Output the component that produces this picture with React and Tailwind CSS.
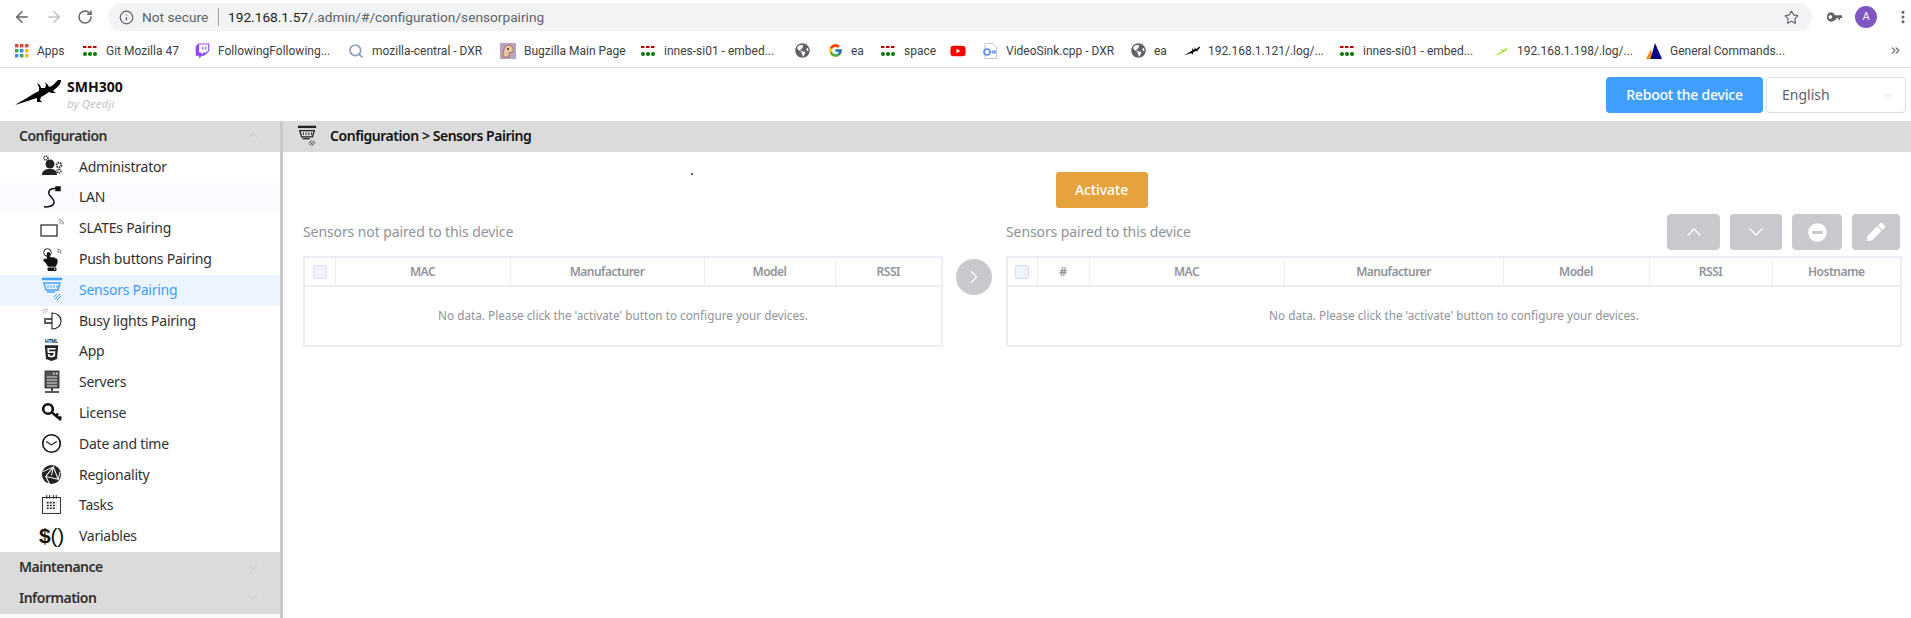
import React from 'react';
import { ArrowLeft, ArrowRight, RotateCw, Info, Star, EllipsisVertical, ChevronUp, ChevronDown, ChevronRight, ChevronsRight, Search } from 'lucide-react';
import { FaTwitch, FaYoutube, FaHtml5, FaGlobeAmericas, FaHandPointUp, FaPen, FaMinusCircle } from 'react-icons/fa';
import { FcGoogle } from 'react-icons/fc';

const Gecko = ({ className, color = '#000' }) => (
  <svg viewBox="0 0 46 27" className={className} fill={color}>
    <path d="M0 26 C8 21 14 18 20 14 L24 12 L24 8 L22 4 L25 6 L26 9 L30 9 L31 6 L30 3 L33 6 L34 8 C38 7 40 4 43 1 L46 1 C46 5 43 8 40 10 L38 12 L41 14 L37 14 L34 13 C31 15 28 17 26 18 L25 21 L27 23 L22 23 L22 19 C14 21 8 24 0 26 Z" />
  </svg>
);
const Dots = () => (
  <svg viewBox="0 0 16 16" className="w-4 h-4 shrink-0">
    <rect x="1" y="3" width="3.5" height="2" fill="#b00" /><rect x="6" y="3" width="3.5" height="2" fill="#b00" /><rect x="11" y="3" width="3.5" height="2" fill="#b00" />
    <circle cx="3" cy="11" r="2" fill="#070" /><circle cx="8" cy="11" r="2" fill="#070" /><circle cx="13" cy="11" r="2" fill="#070" />
  </svg>
);
const AppsIcon = () => (
  <svg viewBox="0 0 14 14" className="w-[14px] h-[14px] shrink-0">
    {[['#ea4335',0,0],['#ea4335',5,0],['#ea4335',10,0],['#34a853',0,5],['#4285f4',5,5],['#fbbc05',10,5],['#4285f4',0,10],['#34a853',5,10],['#fbbc05',10,10]].map(([c,x,y],i)=>(<rect key={i} x={x} y={y} width="3.4" height="3.4" fill={c} />))}
  </svg>
);
const Bug = () => (
  <svg viewBox="0 0 16 16" className="w-4 h-4 shrink-0"><rect width="16" height="16" fill="#b9a2c4" /><path d="M3 14 C3 8 4 3 8 2 C12 2 14 6 13 9 L9 10 L9 14 Z" fill="#e9c79a" stroke="#7a5a45" strokeWidth=".7" /><circle cx="8" cy="6" r="1" fill="#333" /></svg>
);
const Doc = () => (
  <svg viewBox="0 0 16 16" className="w-4 h-4 shrink-0"><path d="M3 .5 H11 L14.5 4 V15.5 H3 Z" fill="#fff" stroke="#c4c7cc" /><circle cx="5" cy="9" r="3" fill="none" stroke="#5b8fe0" strokeWidth="1.6" /><path d="M9 9 H14 M11 7 V11 M13 7 V11" stroke="#5b8fe0" /></svg>
);
const Ansible = () => (
  <svg viewBox="0 0 16 16" className="w-4 h-4 shrink-0"><path d="M0 16 L5 6 L7 16 Z" fill="#f58b1f" /><path d="M4.5 16 L9 0 L16 16 Z" fill="#00008b" /></svg>
);
const Green = () => (
  <svg viewBox="0 0 16 16" className="w-4 h-4 shrink-0"><path d="M1 13 C5 11 7 9 9 8 L8 6 L11 7 L15 4 L13 8 L10 9 C8 11 4 12 1 13 Z" fill="#9be22d" /></svg>
);
const GlobeI = () => <FaGlobeAmericas className="w-[15px] h-[15px] shrink-0 text-[#5f6368]" />;

const bookmarks = [
  { w: 'w-[67px]', icon: <AppsIcon />, t: 'Apps' },
  { w: 'w-[113px]', icon: <Dots />, t: 'Git Mozilla 47' },
  { w: 'w-[153px]', icon: <FaTwitch className="w-[15px] h-4 shrink-0 text-[#9146ff]" />, t: 'FollowingFollowing...' },
  { w: 'w-[152px]', icon: <Search className="w-4 h-4 shrink-0 text-[#8aa0b8]" strokeWidth={2.5} />, t: 'mozilla-central - DXR' },
  { w: 'w-[140px]', icon: <Bug />, t: 'Bugzilla Main Page' },
  { w: 'w-[155px]', icon: <Dots />, t: 'innes-si01 - embed...' },
  { w: 'w-[33px]', icon: <GlobeI /> },
  { w: 'w-[52px]', icon: <FcGoogle className="w-[15px] h-[15px] shrink-0" />, t: 'ea' },
  { w: 'w-[70px]', icon: <Dots />, t: 'space' },
  { w: 'w-[32px]', icon: <FaYoutube className="w-4 h-4 shrink-0 text-[#f00]" /> },
  { w: 'w-[149px]', icon: <Doc />, t: 'VideoSink.cpp - DXR' },
  { w: 'w-[53px]', icon: <GlobeI />, t: 'ea' },
  { w: 'w-[155px]', icon: <Gecko className="w-4 h-4 shrink-0" />, t: '192.168.1.121/.log/...' },
  { w: 'w-[154px]', icon: <Dots />, t: 'innes-si01 - embed...' },
  { w: 'w-[153px]', icon: <Green />, t: '192.168.1.198/.log/...' },
  { w: 'w-[160px]', icon: <Ansible />, t: 'General Commands...' },
];

const Wave = ({ x, y, c = '#666', s = 1 }) => (
  <path d={`M${x} ${y} a${2 * s} ${2 * s} 0 0 1 ${2 * s} ${2 * s} M${x} ${y - 2 * s} a${4 * s} ${4 * s} 0 0 1 ${4 * s} ${4 * s}`} fill="none" stroke={c} strokeWidth=".9" />
);
const AdminI = () => (
  <svg viewBox="0 0 22 22" className="w-[22px] h-[22px]" fill="#222">
    <circle cx="9" cy="9" r="4.5" /><path d="M1 20 C1 15 5 14 9 14 C13 14 16 15 16 20 Z" />
    <circle cx="5" cy="3" r="2" fill="none" stroke="#222" strokeWidth="1.5" strokeDasharray="1 .7" /><circle cx="18" cy="10" r="2.4" fill="none" stroke="#222" strokeWidth="1.8" strokeDasharray="1.4 .8" /><circle cx="18" cy="16" r="1.8" fill="none" stroke="#222" strokeWidth="1.5" strokeDasharray="1 .6" />
  </svg>
);
const LanI = () => (
  <svg viewBox="0 0 22 24" className="w-[22px] h-6" fill="none" stroke="#111" strokeWidth="1.5">
    <path d="M15 3.5 C10 3 7 5 8 9 C9 12 14 14 13 18 C12 22 7 22 3 22" /><rect x="15" y="2" width="4" height="3.5" fill="#111" />
  </svg>
);
const SlateI = () => (
  <svg viewBox="0 0 24 20" className="w-6 h-5" fill="none">
    <rect x="1" y="7" width="16" height="11" stroke="#222" strokeWidth="1.2" /><Wave x="19" y="4" s={1.1} />
  </svg>
);
const PushI = () => (
  <div className="relative w-[22px] h-6">
    <FaHandPointUp className="w-[19px] h-[19px] absolute left-0 top-[5px] text-[#111]" />
    <svg viewBox="0 0 22 24" className="w-[22px] h-6 absolute left-0 top-0" fill="none"><circle cx="6.5" cy="5.5" r="3.8" stroke="#222" strokeWidth="1" /><Wave x="16" y="4" s={1} /></svg>
  </div>
);
const SensorI = ({ c = '#409eff', w = 'w-[22px] h-6' }) => (
  <svg viewBox="0 0 22 24" className={w} fill="none" stroke={c}>
    <path d="M1 2 H21" strokeWidth="2.6" /><path d="M3 6 H19 L17 13 H5 Z" strokeWidth="1.4" /><path d="M7 8 V11 M10 8 V11 M13 8 V11 M16 8 V11" strokeWidth="1" /><path d="M6 15 H14" strokeWidth="1.4" /><path d="M14 22 L19 17 M16 23 L20 19 M13 20 L16 17" strokeWidth="1" />
  </svg>
);
const BusyI = () => (
  <svg viewBox="0 0 22 24" className="w-[22px] h-6" fill="none" stroke="#222">
    <path d="M11 5 C17 5 20 9 20 13 C20 18 16 21 11 21 Z" strokeWidth="1.1" /><path d="M5 11 H11 M5 15 H11 M4 10 V16" strokeWidth="1.4" /><path d="M2 6 a3 3 0 0 1 4 -2 M1 3 a5 5 0 0 1 6 -1" stroke="#999" strokeWidth=".8" />
  </svg>
);
const HtmlI = () => (
  <div className="flex flex-col items-center text-[#222]">
    <span className="text-[5px] leading-[5px] font-bold font-['Liberation_Sans',sans-serif]">HTML</span>
    <FaHtml5 className="w-[17px] h-[18px]" />
  </div>
);
const ServerI = () => (
  <svg viewBox="0 0 22 24" className="w-[22px] h-6" fill="none">
    <rect x="4" y="1" width="14" height="17" fill="#555" stroke="#222" strokeWidth=".8" /><path d="M6 7 H16 M6 10 H16 M6 13 H16 M6 16 H16" stroke="#ddd" strokeWidth="1" /><circle cx="13" cy="3.4" r="1" fill="#ddd" /><circle cx="16" cy="3.4" r="1" fill="#ddd" /><path d="M11 18 V21 M4 22 H18" stroke="#222" strokeWidth="1.6" />
  </svg>
);
const KeyI = () => (
  <svg viewBox="0 0 22 22" className="w-[22px] h-[22px]" fill="none" stroke="#111" strokeWidth="2.6">
    <circle cx="7" cy="7" r="4.8" /><path d="M11 10.5 L20 18 M15 14 L17 11.5 M18 17 L20 14.5" />
  </svg>
);
const ClockI = () => (
  <svg viewBox="0 0 22 22" className="w-[21px] h-[21px]" fill="none" stroke="#111">
    <circle cx="11" cy="11" r="9.2" strokeWidth="1.7" /><path d="M5.5 9 L11 12.5 L16.5 9" strokeWidth="1.2" />
  </svg>
);
const GlobeDark = () => (
  <svg viewBox="0 0 22 22" className="w-[21px] h-[21px]">
    <circle cx="11" cy="11" r="10" fill="#222" /><path d="M13 3 L18 16 L5 13 Z M13 3 L11 12 M2 8 L13 3 M5 13 L9 21 M18 16 L20 8" fill="none" stroke="#fff" strokeWidth="1.1" />
  </svg>
);
const TasksI = () => (
  <svg viewBox="0 0 20 20" className="w-[19px] h-[19px]" fill="none" stroke="#222">
    <rect x=".6" y="2.6" width="18.8" height="16.8" strokeWidth="1" /><path d="M5 0 V4 M8 0 V4 M12 0 V4 M15 0 V4" strokeWidth="1" /><path d="M5 8 H15 M5 11 H15 M5 14 H15" strokeWidth="1.7" strokeDasharray="2 1.2" />
  </svg>
);

const items = [
  ['Administrator', <AdminI />], ['LAN', <LanI />], ['SLATEs Pairing', <SlateI />], ['Push buttons Pairing', <PushI />],
  ['Sensors Pairing', <SensorI />], ['Busy lights Pairing', <BusyI />], ['App', <HtmlI />],
  ['Servers', <ServerI />], ['License', <KeyI />], ['Date and time', <ClockI />],
  ['Regionality', <GlobeDark />], ['Tasks', <TasksI />],
  ['Variables', <span className="text-[21px] leading-none text-[#111] font-['Liberation_Sans',sans-serif] whitespace-nowrap"><b>$</b>()</span>],
];

const SectionHead = ({ t, up }) => (
  <div className="h-[30.8px] bg-[#dbdbdb] flex items-center justify-between pl-[19px] pr-[20px] pb-[2px] text-[14px] font-semibold tracking-[-0.5px] text-[#303133]">
    <span>{t}</span>
    {up ? <ChevronUp className="w-[14px] h-[14px] text-[#b0b3b8]" strokeWidth={1} /> : <ChevronDown className="w-[14px] h-[14px] text-[#b0b3b8]" strokeWidth={1} />}
  </div>
);

const Th = ({ w, children, last }) => (
  <th className={`${w} h-[29px] p-0 border-b-2 border-[#ebeef5] ${last ? '' : 'border-r'} text-[12px] font-semibold tracking-[-0.5px] text-[#909399] text-center`}>{children}</th>
);
const Check = () => <span className="inline-block align-middle w-[14px] h-[14px] rounded-[2px] bg-[#edf2fc] border border-[#dcdfe6]" />;

const SquareBtn = ({ w, children }) => (
  <div className={`${w} h-9 rounded-[4px] bg-[#c8c9cc] flex items-center justify-center text-white`}>{children}</div>
);

export default function App() {
  return (
    <div className="w-[1911px] h-[618px] overflow-hidden bg-white flex flex-col font-['Noto_Sans',sans-serif]">
      <div className="h-[34px] flex items-center bg-white font-['Roboto',sans-serif]">
        <div className="w-[108px] flex items-center pl-[13px] gap-[14px] shrink-0">
          <ArrowLeft className="w-[18px] h-[18px] text-[#5f6368]" strokeWidth={2} />
          <ArrowRight className="w-[18px] h-[18px] text-[#bdc1c6]" strokeWidth={2} />
          <RotateCw className="w-4 h-4 text-[#5f6368]" strokeWidth={2.2} />
        </div>
        <div className="w-[1704px] shrink-0 h-7 rounded-full bg-[#f1f3f4] flex items-center pl-[11px] pr-[13px] text-[13.7px]">
          <Info className="w-[15px] h-[15px] text-[#5f6368] shrink-0" strokeWidth={2} />
          <span className="ml-[8px] text-[#5f6368] w-[67px] whitespace-nowrap">Not secure</span>
          <span className="ml-[9px] w-px h-[18px] bg-[#9aa0a6]" />
          <span className="ml-[9px] text-[#202124] whitespace-nowrap"><span>192.168.1.57</span><span className="text-[#5f6368]">/.admin/#/configuration/sensorpairing</span></span>
          <Star className="ml-auto w-[15px] h-[15px] text-[#5f6368]" strokeWidth={1.8} />
        </div>
        <div className="flex-1 flex items-center pl-[15px] gap-[13px]">
          <svg viewBox="0 0 16 10" className="w-[15px] h-[10px]" fill="#5f6368"><path d="M4 0 A5 5 0 0 1 8.6 3 H16 V6 H14 V8 H12 V6 H10 V8 H8.6 A5 5 0 1 1 4 0 Z M3.5 3 A2 2 0 1 0 3.6 7 A2 2 0 0 0 3.5 3 Z" /></svg>
          <span className="w-[22px] h-[22px] rounded-full bg-[#7e57c2] text-white text-[11px] flex items-center justify-center">A</span>
          <EllipsisVertical className="w-4 h-4 ml-[5px] text-[#5f6368]" strokeWidth={2.5} />
        </div>
      </div>
      <div className="h-[34px] flex items-center pl-[15px] border-b border-[#dadce0] text-[12px] text-[#3c4043] font-['Roboto',sans-serif] shrink-0">
        {bookmarks.map((b, i) => (
          <div key={i} className={`${b.w} flex items-center gap-[8px] shrink-0 whitespace-nowrap`}>
            {b.icon}{b.t && <span>{b.t}</span>}
          </div>
        ))}
        <ChevronsRight className="ml-auto mr-[9px] w-[13px] h-[13px] text-[#5f6368]" strokeWidth={2} />
      </div>

      <div className="h-[53px] flex items-center justify-between shrink-0">
        <div className="flex items-start pl-[15px]">
          <Gecko className="w-[46px] h-[27px]" />
          <div className="ml-[6px] flex flex-col -mt-[1px]">
            <span className="text-[14px] leading-[18px] font-bold text-[#111]">SMH300</span>
            <span className="text-[11.5px] leading-[15px] italic text-[#c0c4cc]">by Qeedji</span>
          </div>
        </div>
        <div className="flex items-center pr-[5px] gap-[3px]">
          <div className="w-[157px] h-9 rounded-[4px] bg-[#409eff] text-white text-[14px] font-medium tracking-[-0.2px] flex items-center justify-center">Reboot the device</div>
          <div className="w-[140px] h-9 rounded-[4px] border border-[#dcdfe6] text-[#606266] text-[14px] flex items-center justify-between pl-[15px] pr-[10px]">
            <span>English</span><ChevronDown className="w-[14px] h-[14px] text-[#c0c4cc]" strokeWidth={1.2} />
          </div>
        </div>
      </div>

      <div className="flex-1 flex min-h-0">
        <div className="w-[280px] shrink-0 bg-[#fafafa] flex flex-col">
          <SectionHead t="Configuration" up />
          <div className="bg-white">
            {items.map(([t, icon]) => (
              <div key={t} className={`h-[30.8px] flex items-center pb-[2px] text-[14px] tracking-[-0.25px] ${t === 'Sensors Pairing' ? 'bg-[#ecf5ff] text-[#409eff]' : t === 'LAN' ? 'bg-[#f9fbfe] text-[#303133]' : 'text-[#303133]'}`}>
                <span className="w-[79px] shrink-0 flex justify-center pl-[24px]">{icon}</span>
                <span>{t}</span>
              </div>
            ))}
          </div>
          <SectionHead t="Maintenance" />
          <SectionHead t="Information" />
        </div>
        <div className="w-[3px] shrink-0 bg-[#c9c9c9]" />
        <div className="flex-1 min-w-0 flex flex-col">
          <div className="h-[31px] bg-[#dbdbdb] flex items-center pl-[14px] pb-[2px] gap-[13px] text-[14px] font-semibold tracking-[-0.45px] text-[#111]">
            <SensorI c="#222" w="w-[20px] h-[22px]" />
            <span>Configuration &gt; Sensors Pairing</span>
          </div>
          <div className="pl-5 pr-[11px] pt-5 flex flex-col">
            <div className="relative flex justify-center">
              <div className="w-[92px] h-9 pb-[2px] rounded-[3px] bg-[#e6a23c] text-white text-[14px] font-medium tracking-[-0.1px] flex items-center justify-center">Activate</div>
              <span className="absolute left-[388px] top-[1px] w-[2px] h-[2px] rounded-full bg-[#223]" />
            </div>
            <div className="flex mt-[6px]">
              <div className="w-[638px] shrink-0">
                <div className="h-9 mb-[6px] pb-[2px] flex items-center text-[14px] tracking-[-0.1px] text-[#909399]">Sensors not paired to this device</div>
                <table className="w-full table-fixed border-collapse border-2 border-[#ebeef5]">
                  <thead><tr>
                    <Th w="w-[31px]"><Check /></Th><Th w="w-[175px]">MAC</Th><Th w="w-[194px]">Manufacturer</Th><Th w="w-[131px]">Model</Th><Th w="w-[107px]" last>RSSI</Th>
                  </tr></thead>
                  <tbody><tr><td colSpan={5} className="h-[60px] p-0 text-center text-[11.75px] text-[#909399]">No data. Please click the 'activate' button to configure your devices.</td></tr></tbody>
                </table>
              </div>
              <div className="w-[65px] shrink-0 flex justify-center">
                <div className="mt-[45px] w-9 h-9 rounded-full bg-[#c8c9cc] flex items-center justify-center text-white"><ChevronRight className="w-[22px] h-[22px]" strokeWidth={1.2} /></div>
              </div>
              <div className="flex-1 min-w-0">
                <div className="h-9 mb-[6px] flex items-center justify-between text-[14px] tracking-[-0.1px] text-[#909399]">
                  <span className="pb-[2px]">Sensors paired to this device</span>
                  <div className="flex gap-[10px]">
                    <SquareBtn w="w-[53px]"><ChevronUp className="w-6 h-6" strokeWidth={1.2} /></SquareBtn>
                    <SquareBtn w="w-[52px]"><ChevronDown className="w-6 h-6" strokeWidth={1.2} /></SquareBtn>
                    <SquareBtn w="w-[50px]"><FaMinusCircle className="w-[19px] h-[19px]" /></SquareBtn>
                    <SquareBtn w="w-[48px]"><FaPen className="w-[18px] h-[18px]" /></SquareBtn>
                  </div>
                </div>
                <table className="w-full table-fixed border-collapse border-2 border-[#ebeef5]">
                  <thead><tr>
                    <Th w="w-[30px]"><Check /></Th><Th w="w-[52px]">#</Th><Th w="w-[195px]">MAC</Th><Th w="w-[219px]">Manufacturer</Th><Th w="w-[146px]">Model</Th><Th w="w-[123px]">RSSI</Th><Th w="w-[129px]" last>Hostname</Th>
                  </tr></thead>
                  <tbody><tr><td colSpan={7} className="h-[60px] p-0 text-center text-[11.75px] text-[#909399]">No data. Please click the 'activate' button to configure your devices.</td></tr></tbody>
                </table>
              </div>
            </div>
          </div>
        </div>
      </div>
    </div>
  );
}
